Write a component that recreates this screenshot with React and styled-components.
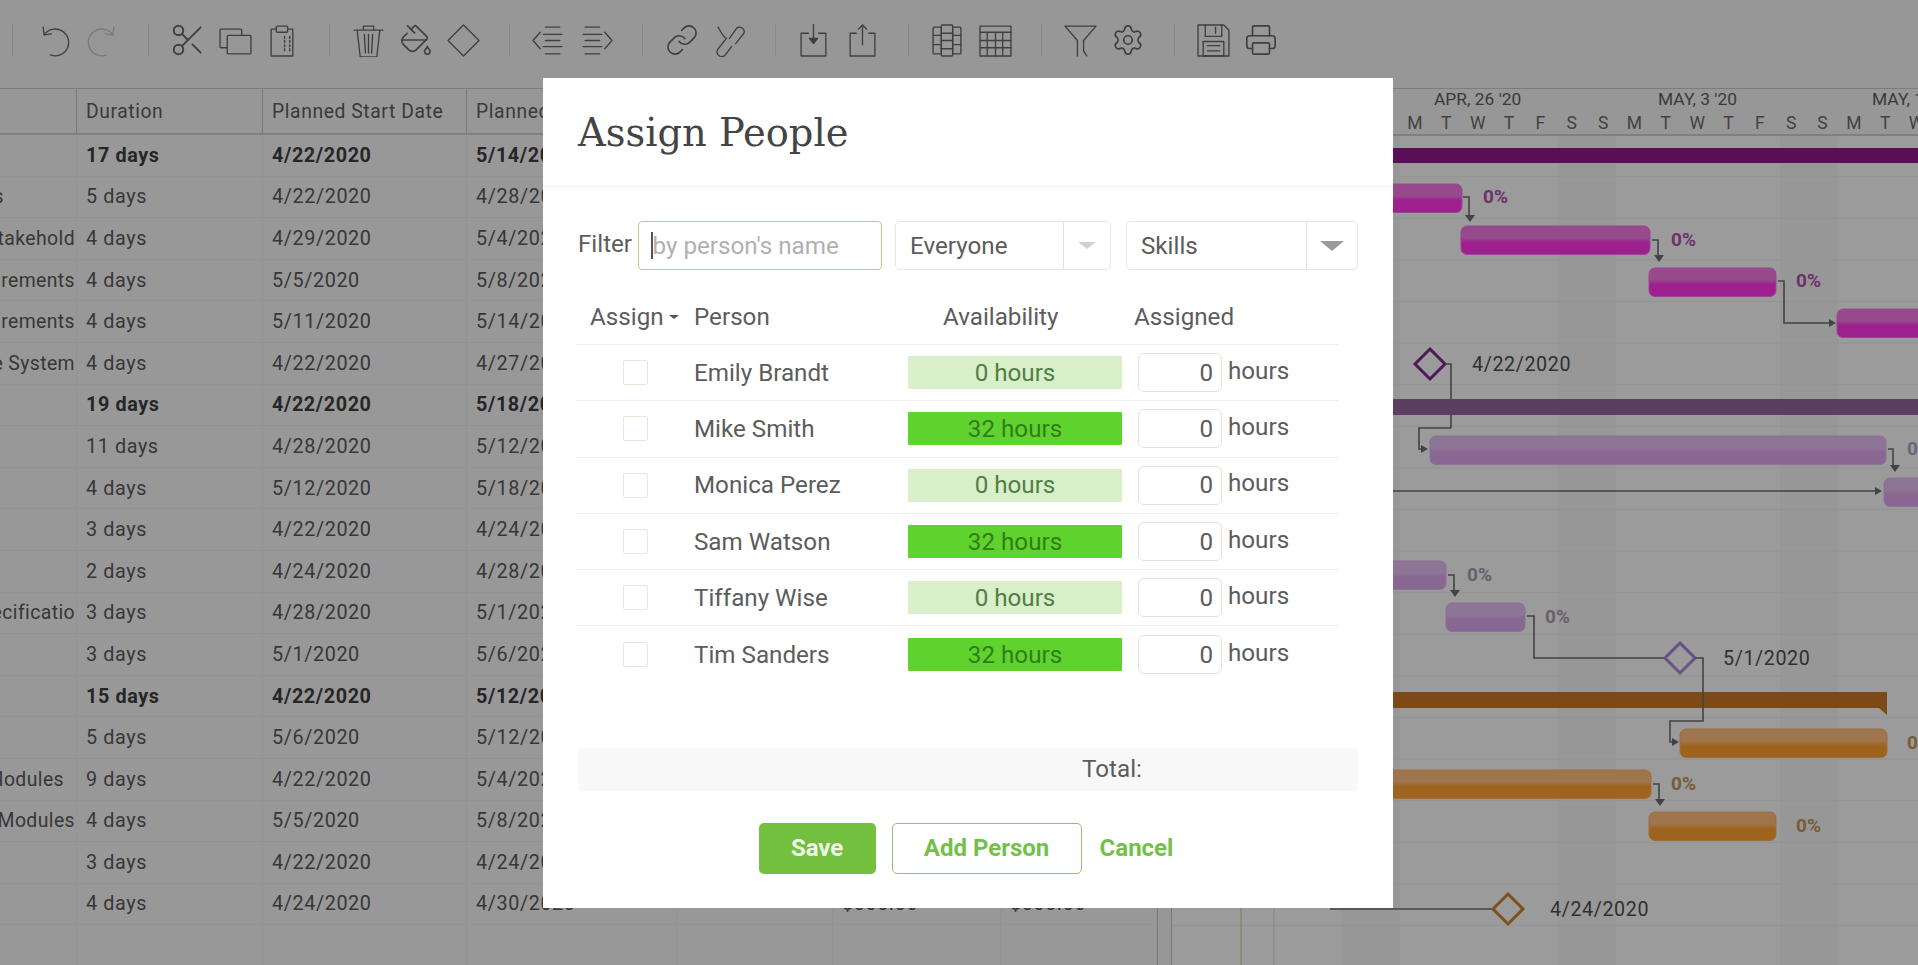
import React from "react";
import styled, { createGlobalStyle } from "styled-components";
import { Scissors, PaintBucket, Link as LinkIcon, Settings, Printer } from "lucide-react";

const Global = createGlobalStyle`
  html, body { margin: 0; padding: 0; height: 100%; background: #fff; overflow: hidden; }
  body { font-family: Roboto, "Liberation Sans", sans-serif; }
  #root { height: 100%; }
`;

const Page = styled.div`
  position: relative;
  width: 1918px;
  height: 965px;
  overflow: hidden;
  background: #f6f6f6;
`;
const Toolbar = styled.div`
  height: 88px;
  box-sizing: border-box;
  padding: 24px 0 0 12px;
  display: flex;
  align-items: flex-start;
  background: #f4f4f4;
  color: #666;
`;
const Sep = styled.div`
  width: 1px;
  height: 32px;
  background: #dcdcdc;
  margin: 0 15px 0 ${(p) => (p.$first ? 0 : 22)}px;
`;
const Group = styled.div`
  display: flex;
  margin-left: ${(p) => (p.$first ? 3 : 0)}px;
`;
const Tool = styled.div`
  width: 47.5px;
  height: 32px;
  display: flex;
  align-items: center;
  justify-content: center;
  color: ${(p) => (p.$off ? "#c4c4c4" : "#666")};
`;
const Main = styled.div`
  display: flex;
  height: 877px;
  border-top: 1px solid #c8c8c8;
  box-sizing: border-box;
`;
const Table = styled.div`
  width: 1157px;
  flex: none;
`;
const HeadRow = styled.div`
  display: grid;
  grid-template-columns: 77px 186px 204px 210px 156px 168px 156px;
  height: 46px;
  border-bottom: 2px solid #cfcfcf;
  box-sizing: border-box;
  background: #f4f4f4;
`;
const HeadCell = styled.div`
  display: flex;
  align-items: center;
  padding-left: 9px;
  border-right: 1px solid #c6c6c6;
  font-size: 19.3px;
  letter-spacing: 0.6px;
  color: #5e5e5e;
  white-space: nowrap;
  overflow: hidden;
`;
const Row = styled.div`
  display: grid;
  grid-template-columns: 77px 186px 204px 210px 156px 168px 156px;
  height: 41.6px;
  box-sizing: border-box;
  border-bottom: 1px solid #ededed;
`;
const Cell = styled.div`
  display: flex;
  align-items: center;
  padding-left: 9px;
  border-right: 1px solid #ededed;
  font-size: 19.8px;
  letter-spacing: 0.6px;
  font-weight: ${(p) => (p.$bold ? 700 : 400)};
  color: ${(p) => (p.$bold ? "#3e3e3e" : "#5a5a5a")};
  white-space: nowrap;
  overflow: hidden;
`;
const NameCell = styled(Cell)`
  justify-content: flex-end;
  padding-left: 0;
  padding-right: ${(p) => p.$pad}px;
  font-size: 19.4px;
  letter-spacing: 0.4px;
`;
const Splitter = styled.div`
  width: 15px;
  flex: none;
  border-left: 1px solid #c6c6c6;
  border-right: 1px solid #c6c6c6;
  box-sizing: border-box;
  background: #f4f4f4;
`;
const GanttPane = styled.div`
  flex: 1;
  min-width: 0;
  background: #fbfbfb;
`;
const GanttSvg = styled.svg`
  display: block;
  font-family: Roboto, "Liberation Sans", sans-serif;
`;
const Backdrop = styled.div`
  position: absolute;
  inset: 0;
  background: rgba(0, 0, 0, 0.38);
`;
const Modal = styled.div`
  position: absolute;
  left: 543px;
  top: 78px;
  width: 850px;
  height: 830px;
  background: #fff;
  color: #5c5c5c;
  font-size: 24.2px;
`;
const ModalHeader = styled.div`
  height: 109px;
  box-sizing: border-box;
  border-bottom: 1px solid #f1f1f1;
  padding: 0 35px;
  display: flex;
  align-items: center;
`;
const Title = styled.h1`
  margin: 0;
  font-family: "DejaVu Serif", "Liberation Serif", serif;
  font-size: 38.4px;
  font-weight: 400;
  color: #444;
`;
const ModalBody = styled.div`
  padding: 34px 35px 0;
`;
const FilterRow = styled.div`
  display: flex;
  align-items: center;
  height: 49px;
`;
const FilterLabel = styled.label`
  width: 60px;
  flex: none;
  position: relative;
  top: -2px;
`;
const FilterInput = styled.div`
  width: 244px;
  height: 49px;
  flex: none;
  box-sizing: border-box;
  border: 1.5px solid #b3d188;
  border-radius: 4px;
  display: flex;
  align-items: center;
  padding-left: 12px;
  color: #b0b0b0;
  position: relative;
  white-space: nowrap;
`;
const Caret = styled.span`
  width: 1.5px;
  height: 27px;
  background: #555;
`;
const Select = styled.div`
  width: ${(p) => p.$w}px;
  height: 49px;
  flex: none;
  margin-left: ${(p) => p.$ml}px;
  box-sizing: border-box;
  border: 1.5px solid #e6e6e6;
  border-radius: 5px;
  display: flex;
  align-items: center;
`;
const SelectText = styled.span`
  flex: 1;
  padding-left: 14px;
`;
const SelectArrowBox = styled.span`
  width: ${(p) => p.$w}px;
  height: 100%;
  box-sizing: border-box;
  border-left: 1.5px solid #e2e2e2;
  display: flex;
  align-items: center;
  justify-content: center;
`;
const Arrow = styled.span`
  width: 0;
  height: 0;
  border-left: ${(p) => p.$s}px solid transparent;
  border-right: ${(p) => p.$s}px solid transparent;
  border-top: ${(p) => p.$s * 0.85}px solid ${(p) => p.$c};
`;
const PeopleGrid = styled.div`
  margin-left: -2px;
  width: 762px;
`;
const PeopleHead = styled.div`
  display: grid;
  grid-template-columns: 118px 214px 230px 200px;
  height: 75px;
  padding-top: 20px;
  box-sizing: border-box;
  align-items: center;
  border-bottom: 1px solid #eeeeee;
`;
const AssignHead = styled.div`
  padding-left: 14px;
  display: flex;
  align-items: center;
  gap: 5px;
`;
const AvailHead = styled.div`
  padding-left: 35px;
`;
const AssignedHead = styled.div`
  margin-left: -4px;
`;
const PersonRow = styled.div`
  display: grid;
  grid-template-columns: 118px 214px 230px 200px;
  height: 56.3px;
  box-sizing: border-box;
  align-items: center;
  border-bottom: ${(p) => (p.$last ? "none" : "1px solid #eeeeee")};
`;
const CheckWrap = styled.div`
  padding-left: 47px;
  display: flex;
`;
const Check = styled.span`
  width: 25px;
  height: 25px;
  box-sizing: border-box;
  border: 1.5px solid #e5e9d8;
  border-radius: 2px;
`;
const AvailBar = styled.div`
  width: 214px;
  height: 33px;
  border-radius: 1px;
  display: flex;
  align-items: center;
  justify-content: center;
  background: ${(p) => (p.$full ? "#60d22d" : "#d9efca")};
  color: ${(p) => (p.$full ? "#2f7d1a" : "#4f7f42")};
`;
const AssignedWrap = styled.div`
  display: flex;
  align-items: center;
`;
const HoursInput = styled.div`
  width: 84px;
  height: 39px;
  flex: none;
  box-sizing: border-box;
  border: 1.5px solid #e2e2e2;
  border-radius: 6px;
  padding-right: 8px;
  display: flex;
  align-items: center;
  justify-content: flex-end;
`;
const HoursLabel = styled.span`
  margin-left: 6px;
  position: relative;
  top: -2px;
`;
const TotalBar = styled.div`
  margin-top: 65px;
  height: 43px;
  background: #f8f8f8;
  border-radius: 3px;
  display: flex;
  align-items: center;
  padding-left: 504px;
`;
const Actions = styled.div`
  margin-top: 32px;
  padding-right: 4px;
  display: flex;
  justify-content: center;
  align-items: center;
`;
const SaveBtn = styled.div`
  width: 117px;
  height: 51px;
  border-radius: 5px;
  background: #73bf3f;
  color: #eef7e6;
  font-weight: 700;
  font-size: 24px;
  display: flex;
  align-items: center;
  justify-content: center;
`;
const AddBtn = styled.div`
  width: 190px;
  height: 51px;
  margin-left: 16px;
  box-sizing: border-box;
  border: 1.5px solid #93c06c;
  border-radius: 5px;
  color: #75bf4d;
  font-weight: 700;
  font-size: 24px;
  display: flex;
  align-items: center;
  justify-content: center;
`;
const CancelBtn = styled.div`
  margin-left: 18px;
  color: #75bf4d;
  font-weight: 700;
  font-size: 24px;
`;

const Ico = ({ children }) => (
  <svg width="33" height="33" viewBox="0 0 32 32" fill="none" stroke="currentColor" strokeWidth="1.3" strokeLinecap="round" strokeLinejoin="round">
    {children}
  </svg>
);
const lucideProps = { size: 34, strokeWidth: 1.15 };

const toolGroups = [
  [
    <Ico><path d="M6 10.5A13 13 0 1 1 12 30" /><path d="M5 3 6 10.5 13 9.5" /></Ico>,
    <Tool $off key="r"><Ico><path d="M26 10.5A13 13 0 1 0 20 30" /><path d="M27 3 26 10.5 19 9.5" /></Ico></Tool>,
  ],
  [
    <Scissors size={38} strokeWidth={1.2} />,
    <Ico><rect x="1" y="5" width="21" height="18" rx="1" /><rect x="8" y="11" width="23" height="18" rx="1" fill="#f4f4f4" /></Ico>,
    <Ico><path d="M10 5H5v26h21V5h-5" /><rect x="10" y="2" width="11" height="6" rx="1" /><path d="M18 12v16M23 12v16" strokeDasharray="2 2" /></Ico>,
  ],
  [
    <Ico><path d="M2 6h28M11 5V2h10v3M5 6l3 26h16l3-26M12 10l1 18M16 10v18M20 10l-1 18" /></Ico>,
    <PaintBucket {...lucideProps} />,
    <Ico><path d="M16 1 31 16 16 31 1 16Z" /></Ico>,
  ],
  [
    <Ico><path d="M8 8 1 16l7 8M13 3h14M11 10h18M13 16h14M11 22h18M13 29h14" /></Ico>,
    <Ico><path d="M24 8l7 8-7 8M5 3h14M3 10h18M5 16h14M3 22h18M5 29h14" /></Ico>,
  ],
  [
    <LinkIcon {...lucideProps} />,
    <Ico><path d="M16 14 23 4a4.5 4.5 0 0 1 7 5L22 19" /><path d="M5 3c3 5 4 9 8 11L5 24a4.5 4.5 0 0 0 7 6l6-8" /></Ico>,
  ],
  [
    <Ico><path d="M10 9H3v22h24V9h-7" /><path d="M15 0v17" /><path d="M11 14h8l-4 5Z" fill="currentColor" /></Ico>,
    <Ico><path d="M10 9H4v22h24V9h-6" /><path d="M16 20V1M12 5l4-4 4 4" /></Ico>,
  ],
  [
    <Ico><rect x="2" y="3" width="8" height="26" rx="1" /><rect x="10" y="1" width="11" height="30" rx="1" /><rect x="21" y="3" width="8" height="26" rx="1" /><path d="M2 11h8M2 20h8M21 11h8M21 20h8M10 9h11M10 16h11M10 24h11" /></Ico>,
    <Ico><rect x="1" y="2" width="30" height="29" /><path d="M1 8h30M1 16h30M1 23h30M8 8v23M16 8v23M23 8v23" /></Ico>,
  ],
  [
    <Ico><path d="M1 2h30L19 16v10l3 5M13 31v-15L1 2" /></Ico>,
    <Settings {...lucideProps} />,
  ],
  [
    <Ico><path d="M1 1h25l5 5v25H1Z" /><path d="M8 1v11h16V1M18 3v6" /><rect x="6" y="17" width="20" height="14" /><path d="M10 21h12M10 26h12" /></Ico>,
    <Printer {...lucideProps} />,
  ],
];

const rows = [
  ["", "17 days", "4/22/2020", "5/14/2020", "", "", 1],
  ["s", "5 days", "4/22/2020", "4/28/2020", "", "", 0, 72],
  ["Engage Stakehold", "4 days", "4/29/2020", "5/4/2020"],
  ["Gather Requirements", "4 days", "5/5/2020", "5/8/2020"],
  ["Analyze Requirements", "4 days", "5/11/2020", "5/14/2020"],
  ["Define System", "4 days", "4/22/2020", "4/27/2020"],
  ["", "19 days", "4/22/2020", "5/18/2020", "", "", 1],
  ["", "11 days", "4/28/2020", "5/12/2020"],
  ["", "4 days", "5/12/2020", "5/18/2020"],
  ["", "3 days", "4/22/2020", "4/24/2020"],
  ["", "2 days", "4/24/2020", "4/28/2020"],
  ["Design Specificatio", "3 days", "4/28/2020", "5/1/2020"],
  ["", "3 days", "5/1/2020", "5/6/2020"],
  ["", "15 days", "4/22/2020", "5/12/2020", "", "", 1],
  ["", "5 days", "5/6/2020", "5/12/2020"],
  ["Code Modules", "9 days", "4/22/2020", "5/4/2020", "", "", 0, 12],
  ["Test Modules", "4 days", "5/5/2020", "5/8/2020"],
  ["", "3 days", "4/22/2020", "4/24/2020"],
  ["", "4 days", "4/24/2020", "4/30/2020", "$000.00", "$000.00"],
  ["", "", "", ""],
];

const people = [
  ["Emily Brandt", 0],
  ["Mike Smith", 32],
  ["Monica Perez", 0],
  ["Sam Watson", 32],
  ["Tiffany Wise", 0],
  ["Tim Sanders", 32],
];

const dayLetters = "MTWTFSSMTWTFSSMTW".split("");
const X0 = 1172;
const Y0 = 89;

const Bar = ({ x1, x2, y, id, e }) => (
  <rect x={x1} y={y} width={x2 - x1} height={28.5} rx="6" fill={`url(#${id})`} stroke={e} strokeWidth="1" />
);
const Grad = ({ id, t, b }) => (
  <linearGradient id={id} x1="0" y1="0" x2="0" y2="1">
    <stop offset="0" stopColor={t} />
    <stop offset="0.42" stopColor={t} />
    <stop offset="0.58" stopColor={b} />
    <stop offset="1" stopColor={b} />
  </linearGradient>
);
const Pct = ({ x, y, c, children = "0%" }) => (
  <text x={x} y={y + 6} fontSize="19" fontWeight="700" fill={c}>{children}</text>
);
const Diamond = ({ cx, cy, c }) => (
  <path d={`M${cx} ${cy - 15}L${cx + 15} ${cy}L${cx} ${cy + 15}L${cx - 15} ${cy}Z`} fill="none" stroke={c} strokeWidth="3" />
);
const DateLabel = ({ x, y, children }) => (
  <text x={x} y={y + 7} fontSize="19.7" letterSpacing="0.6" fill="#4e4e4e">{children}</text>
);
const Line = ({ d }) => <path d={d} fill="none" stroke="#6c6c6c" strokeWidth="1.6" />;
const Head = ({ x, y }) => <path d={`M${x - 5} ${y - 7}h10l-5 7Z`} fill="#6c6c6c" />;
const HeadR = ({ x, y }) => <path d={`M${x - 7} ${y - 4}l7 4-7 4Z`} fill="#6c6c6c" />;

const MAG = { id: "gm", e: "#ff6ef0" };
const PUR = { id: "gp", e: "#e2b5f2" };
const ORG = { id: "go", e: "#ffb060" };

const Gantt = () => (
  <GanttSvg width="746" height="876" viewBox={`${X0} ${Y0} 746 876`}>
    <defs>
      <Grad id="gm" t="#f277e0" b="#ff34e7" />
      <Grad id="gp" t="#e4bdf2" b="#dca7ec" />
      <Grad id="go" t="#ffbd7c" b="#ffa130" />
    </defs>
    <rect x={X0} y={Y0} width="746" height="46" fill="#f4f4f4" />
    {[1342, 1558, 1780].map((x) => (
      <rect key={x} x={x} y={135} width="58" height="830" fill="#f4f4f4" />
    ))}
    {Array.from({ length: 20 }, (_, i) => (
      <line key={i} x1={X0} x2="1918" y1={135 + i * 41.6} y2={135 + i * 41.6} stroke="#efefef" strokeWidth="1.5" />
    ))}
    <line x1={X0} x2="1918" y1="135" y2="135" stroke="#cfcfcf" strokeWidth="2" />
    <line x1="1241" x2="1241" y1="135" y2="965" stroke="#b6d68c" />
    <line x1="1274" x2="1274" y1="135" y2="965" stroke="#d6d6d6" />
    <text x="1434" y="105" fontSize="17.4" fill="#5e5e5e">APR, 26 '20</text>
    <text x="1658" y="105" fontSize="17.4" fill="#5e5e5e">MAY, 3 '20</text>
    <text x="1872" y="105" fontSize="17.4" fill="#5e5e5e">MAY, 10 '20</text>
    {dayLetters.map((d, i) => (
      <text key={i} x={1415 + i * 31.35} y="129" textAnchor="middle" fontSize="17.5" fill="#6a6a6a">{d}</text>
    ))}

    <rect x="1380" y="148" width="538" height="15" fill="#91188c" />
    <Bar x1={1380} x2={1462} y={184} {...MAG} />
    <Pct x={1483} y={197} c="#b350aa" />
    <Line d="M1463 197h6v19" /><Head x={1470} y={222} />
    <Bar x1={1461} x2={1650} y={226} {...MAG} />
    <Pct x={1671} y={240} c="#b350aa" />
    <Line d="M1652 240h6v17" /><Head x={1659} y={262} />
    <Bar x1={1649} x2={1776} y={268} {...MAG} />
    <Pct x={1796} y={281} c="#b350aa" />
    <Line d="M1778 281h6v42h48" /><HeadR x={1836} y={323} />
    <Bar x1={1837} x2={1930} y={309} {...MAG} />

    <Diamond cx={1430} cy={364} c="#812891" />
    <DateLabel x={1472} y={364}>4/22/2020</DateLabel>
    <Line d="M1445 364h6v64" />
    <rect x="1380" y="399" width="538" height="16" fill="#94679b" />
    <Line d="M1451 428h-32v21h6" /><HeadR x={1428} y={449} />
    <Bar x1={1430} x2={1886} y={436} {...PUR} />
    <Pct x={1907} y={449} c="#b5a0bd" />
    <Line d="M1888 449h5v18" /><Head x={1895} y={472} />
    <Line d="M1380 491h500" /><HeadR x={1882} y={491} />
    <Bar x1={1884} x2={1930} y={478} {...PUR} />

    <Bar x1={1380} x2={1446} y={561} {...PUR} />
    <Pct x={1467} y={575} c="#a89aae" />
    <Line d="M1448 575h6v16" /><Head x={1455} y={597} />
    <Bar x1={1446} x2={1525} y={603} {...PUR} />
    <Pct x={1545} y={617} c="#a89aae" />
    <Line d="M1527 616h7v42h130" />
    <Diamond cx={1680} cy={658} c="#a684dc" />
    <DateLabel x={1723} y={658}>5/1/2020</DateLabel>

    <path d="M1380 692H1887V715L1879 708H1380Z" fill="#ca7725" />
    <Line d="M1695 658h8v63h-33v21h5" /><HeadR x={1679} y={742} />
    <Bar x1={1680} x2={1887} y={729} {...ORG} />
    <Pct x={1907} y={743} c="#c5945a" />
    <Bar x1={1380} x2={1651} y={770} {...ORG} />
    <Pct x={1671} y={784} c="#c5945a" />
    <Line d="M1653 784h6v16" /><Head x={1660} y={806} />
    <Bar x1={1649} x2={1776} y={812} {...ORG} />
    <Pct x={1796} y={826} c="#c5945a" />

    <Line d="M1330 909h164" />
    <Diamond cx={1508} cy={909} c="#ca8130" />
    <DateLabel x={1550} y={909}>4/24/2020</DateLabel>
  </GanttSvg>
);

export default function App() {
  return (
    <Page>
      <Global />
      <Toolbar>
        {toolGroups.map((g, i) => (
          <React.Fragment key={i}>
            <Sep $first={i === 0} />
            <Group $first={i === 0}>
              {g.map((icon, j) =>
                icon.type === Tool ? React.cloneElement(icon, { key: j }) : <Tool key={j}>{icon}</Tool>
              )}
            </Group>
          </React.Fragment>
        ))}
      </Toolbar>
      <Main>
        <Table>
          <HeadRow>
            <HeadCell />
            <HeadCell>Duration</HeadCell>
            <HeadCell>Planned Start Date</HeadCell>
            <HeadCell>Planned Finish Date</HeadCell>
            <HeadCell>Planned Hours</HeadCell>
            <HeadCell>Planned Cost</HeadCell>
            <HeadCell>Actual Cost</HeadCell>
          </HeadRow>
          {rows.map((r, i) => (
            <Row key={i}>
              <NameCell $pad={r[7] ?? 1}>{r[0]}</NameCell>
              <Cell $bold={r[6]}>{r[1]}</Cell>
              <Cell $bold={r[6]}>{r[2]}</Cell>
              <Cell $bold={r[6]}>{r[3]}</Cell>
              <Cell />
              <Cell>{r[4]}</Cell>
              <Cell>{r[5]}</Cell>
            </Row>
          ))}
        </Table>
        <Splitter />
        <GanttPane>
          <Gantt />
        </GanttPane>
      </Main>
      <Backdrop />
      <Modal>
        <ModalHeader>
          <Title>Assign People</Title>
        </ModalHeader>
        <ModalBody>
          <FilterRow>
            <FilterLabel>Filter</FilterLabel>
            <FilterInput><Caret />by person's name</FilterInput>
            <Select $w={216} $ml={13}>
              <SelectText>Everyone</SelectText>
              <SelectArrowBox $w={47}><Arrow $s={9} $c="#d0d0d0" /></SelectArrowBox>
            </Select>
            <Select $w={232} $ml={15}>
              <SelectText>Skills</SelectText>
              <SelectArrowBox $w={51}><Arrow $s={12} $c="#9a9a9a" /></SelectArrowBox>
            </Select>
          </FilterRow>
          <PeopleGrid>
            <PeopleHead>
              <AssignHead>Assign <Arrow $s={5} $c="#555" /></AssignHead>
              <div>Person</div>
              <AvailHead>Availability</AvailHead>
              <AssignedHead>Assigned</AssignedHead>
            </PeopleHead>
            {people.map(([name, hrs], i) => (
              <PersonRow key={name} $last={i === people.length - 1}>
                <CheckWrap><Check /></CheckWrap>
                <div>{name}</div>
                <AvailBar $full={hrs > 0}>{hrs} hours</AvailBar>
                <AssignedWrap>
                  <HoursInput>0</HoursInput>
                  <HoursLabel>hours</HoursLabel>
                </AssignedWrap>
              </PersonRow>
            ))}
          </PeopleGrid>
          <TotalBar>Total:</TotalBar>
          <Actions>
            <SaveBtn>Save</SaveBtn>
            <AddBtn>Add Person</AddBtn>
            <CancelBtn>Cancel</CancelBtn>
          </Actions>
        </ModalBody>
      </Modal>
    </Page>
  );
}
